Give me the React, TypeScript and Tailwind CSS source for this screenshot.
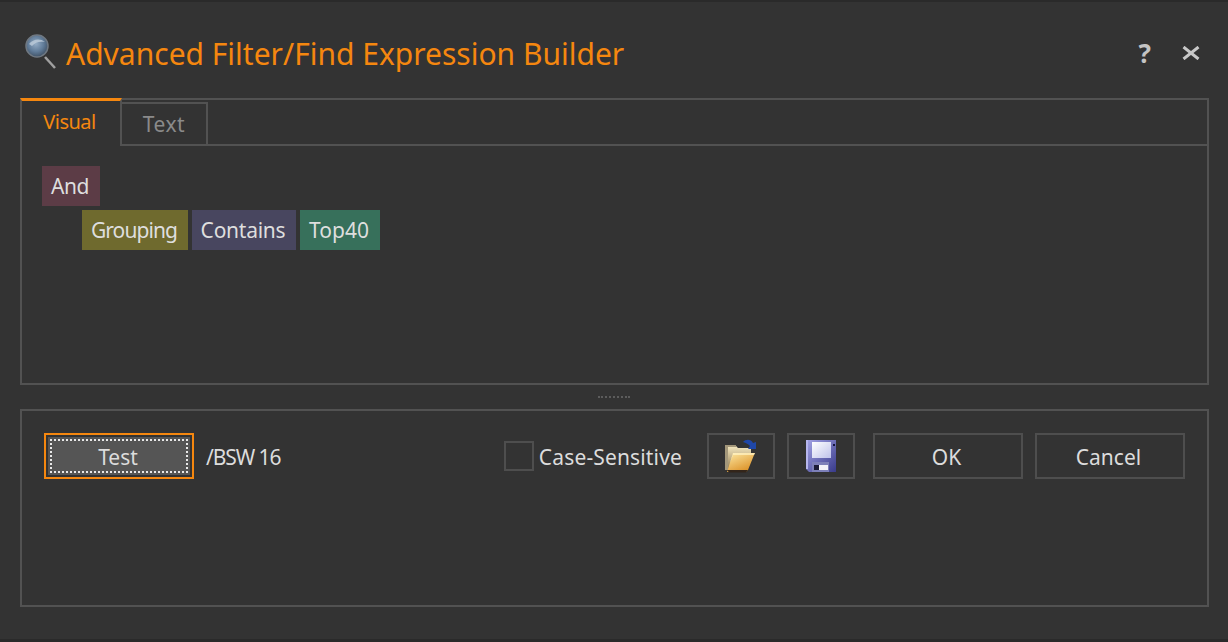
function FolderIcon() {
  return (
    <svg width="34" height="36" viewBox="0 0 34 36" className="block">
      <defs>
        <linearGradient id="folderBack" x1="0" y1="0" x2="0" y2="1">
          <stop offset="0" stopColor="#f8ecc4" />
          <stop offset="1" stopColor="#8f7a52" />
        </linearGradient>
        <linearGradient id="folderFront" x1="0" y1="0" x2="0.6" y2="1">
          <stop offset="0" stopColor="#fdeaa6" />
          <stop offset="1" stopColor="#dc9228" />
        </linearGradient>
      </defs>
      <path d="M1 7h10l3 3h13v6H9L5 32H1z" fill="url(#folderBack)" />
      <path d="M1 7h10l2 2H4v23H1z" fill="#a3977a" />
      <path d="M9 15h22l-1 2-6 15-2 2H3z" fill="url(#folderFront)" />
      <path d="M9 15h22l-1 2H9l-3 8z" fill="#fff4c8" opacity="0.7" />
      <path d="M3 32h21l-2 2.500H5z" fill="#33251a" />
      <path d="M19 4c3-3 8-3 10 1l3-1v7h-8l2-3c-1.500-2-4-3-7-4z" fill="#1f47a8" />
    </svg>
  );
}

function SaveIcon() {
  return (
    <svg width="30" height="32" viewBox="0 0 30 32" className="block">
      <defs>
        <linearGradient id="diskBody" x1="0" y1="0" x2="1" y2="1">
          <stop offset="0" stopColor="#a4a4e6" />
          <stop offset="1" stopColor="#383a8a" />
        </linearGradient>
        <linearGradient id="diskLabel" x1="0" y1="0" x2="1" y2="1">
          <stop offset="0" stopColor="#ffffff" />
          <stop offset="1" stopColor="#bfc3ea" />
        </linearGradient>
      </defs>
      <path d="M0 0h30v32H3l-3-3z" fill="url(#diskBody)" />
      <rect x="0" y="0" width="2" height="29" fill="#b6b6ee" />
      <rect x="6" y="2" width="19" height="16" fill="url(#diskLabel)" />
      <rect x="27" y="4" width="2" height="2" fill="#15163f" />
      <rect x="6" y="22" width="17" height="10" fill="#7d80b8" />
      <rect x="8" y="25" width="14" height="5" fill="#f2f2f8" />
      <rect x="8" y="25" width="5" height="5" fill="#1b1c36" />
    </svg>
  );
}

function SearchIcon() {
  return (
    <svg width="34" height="44" viewBox="0 0 34 44" className="block">
      <defs>
        <radialGradient id="lens" cx="0.45" cy="0.4" r="0.65">
          <stop offset="0" stopColor="#93abc4" />
          <stop offset="0.55" stopColor="#607b98" />
          <stop offset="1" stopColor="#3a4a5c" />
        </radialGradient>
      </defs>
      <path d="M21 27l10 11" stroke="#a0a0a0" strokeWidth="2.500" />
      <circle cx="13" cy="16" r="11" fill="url(#lens)" stroke="#6f7882" strokeWidth="1.500" />
      <path d="M5 14c4-5 11-6 16-2-5-1-10 0-13 4z" fill="#c3d0dd" opacity="0.75" />
    </svg>
  );
}

function Tag({ text, color, width, tracking }: { text: string; color: string; width: string; tracking?: string }) {
  return (
    <span className={`h-10 pr-[2px] flex items-center justify-center text-[#dedede] ${color} ${width} ${tracking ?? ""}`}>
      {text}
    </span>
  );
}

function OutlineButton({ children, width }: { children: React.ReactNode; width: string }) {
  return (
    <button className={`h-[46px] border-2 border-[#4e4e4e] text-[#dcdcdc] flex items-center justify-center ${width}`}>
      {children}
    </button>
  );
}

export default function App() {
  return (
    <div className="w-[1228px] h-[642px] overflow-hidden bg-[#333333] border-t-2 border-b-[3px] border-[#2a2a2a] flex flex-col font-['Noto_Sans',sans-serif] text-[21px] leading-none">
      <header className="h-[96px] flex items-center pl-[24px] pr-[28px] pt-[4px]">
        <SearchIcon />
        <h1 className="ml-[8px] pt-[4px] text-[30px] text-[#f5870f] font-normal">
          Advanced Filter/Find Expression Builder
        </h1>
        <span className="ml-auto mr-[1px] pt-[2px] text-[26px] font-bold text-[#c4c4c4]">?</span>
        <svg width="18" height="14" viewBox="0 0 18 14" className="ml-[30px] mt-[2px]">
          <path d="M1.500 1l15 12M16.500 1l-15 12" stroke="#c8c8c8" strokeWidth="3" />
        </svg>
      </header>

      <section className="ml-[20px] w-[1189px] h-[287px] border-2 border-t-0 border-[#525252] flex flex-col">
        <div className="h-[48px] flex items-end border-t-2 border-[#525252] border-b-2 relative">
          <div className="w-[102px] -ml-[2px] h-[48px] -mt-[2px] self-start border-t-[3px] border-t-[#f5870f] border-l-2 border-r-2 border-[#525252] bg-[#333333] -mb-[2px] flex items-center justify-center text-[#f5870f] text-[20px] tracking-[-0.5px] pb-[4px] pr-[3px]">
            Visual
          </div>
          <div className="w-[86px] h-[42px] border-2 border-b-0 border-l-0 border-[#525252] text-[#8a8a8a] tracking-[0.5px] flex items-center justify-center">
            Text
          </div>
        </div>
        <div className="pt-[20px] pl-[20px] flex flex-col gap-[4px]">
          <div className="flex">
            <Tag text="And" color="bg-[#5c3c46]" width="w-[58px]" tracking="tracking-[-0.5px]" />
          </div>
          <div className="flex gap-[4px] ml-[40px]">
            <Tag text="Grouping" color="bg-[#6f6a2e]" width="w-[106px]" tracking="tracking-[-0.9px]" />
            <Tag text="Contains" color="bg-[#48465f]" width="w-[104px]" tracking="tracking-[-0.25px]" />
            <Tag text="Top40" color="bg-[#37705b]" width="w-[80px]" />
          </div>
        </div>
      </section>

      <div className="h-[24px] flex items-center justify-center">
        <div className="w-[32px] border-t-2 border-dotted border-[#5c5c5c]" />
      </div>

      <section className="ml-[20px] w-[1189px] h-[198px] border-2 border-[#525252] pt-[22px] pl-[22px] pr-[22px]">
        <div className="flex items-center text-[#dcdcdc]">
          <button className="w-[150px] h-[46px] border-2 border-[#f5870f] p-[2px]">
            <span className="h-full flex items-center justify-center bg-[#555555] pt-[2px] pr-[2px] outline-2 outline-dotted -outline-offset-4 outline-[#e8e8e8]">
              Test
            </span>
          </button>
          <span className="ml-[12px] pt-[2px] tracking-[-1.1px]">/BSW 16</span>
          <span className="ml-auto w-[30px] h-[30px] border-2 border-[#4e4e4e]" />
          <span className="ml-[5px] mr-[25px] pt-[2px] tracking-[0.15px]">Case-Sensitive</span>
          <OutlineButton width="w-[68px]">
            <FolderIcon />
          </OutlineButton>
          <div className="ml-[12px]">
            <OutlineButton width="w-[68px]">
              <SaveIcon />
            </OutlineButton>
          </div>
          <div className="ml-[18px]">
            <OutlineButton width="w-[150px]">
              <span className="pt-[2px] pr-[3px]">OK</span>
            </OutlineButton>
          </div>
          <div className="ml-[12px]">
            <OutlineButton width="w-[150px]">
              <span className="pt-[2px] pr-[3px]">Cancel</span>
            </OutlineButton>
          </div>
        </div>
      </section>
    </div>
  );
}
